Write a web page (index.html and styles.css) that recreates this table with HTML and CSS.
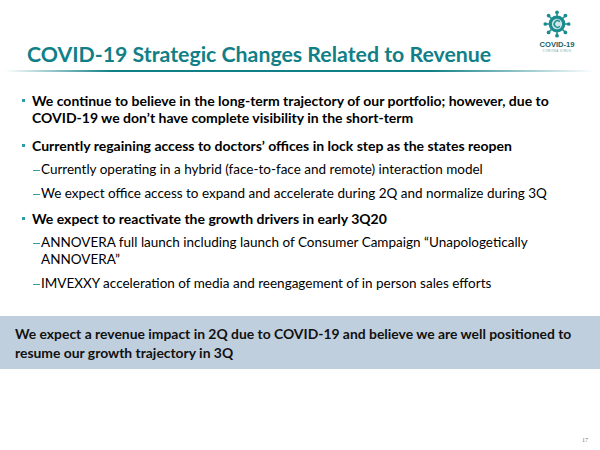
FILE: index.html
```html
<!DOCTYPE html>
<html>
<head>
<meta charset="utf-8">
<link rel="stylesheet" href="styles.css">
</head>
<body>
<div class="slide">
  <header class="header">
    <h1 class="title">COVID-19 Strategic Changes Related to Revenue</h1>
    <div class="logo">
      <svg class="virus" width="28" height="28" viewBox="0 0 30 30">
        <g stroke="#1b8c8f" stroke-width="1.6" fill="#1b8c8f">
          <line x1="15" y1="15" x2="15" y2="2"/>
          <line x1="15" y1="15" x2="15" y2="28"/>
          <line x1="15" y1="15" x2="2" y2="15"/>
          <line x1="15" y1="15" x2="28" y2="15"/>
          <line x1="15" y1="15" x2="5.8" y2="5.8"/>
          <line x1="15" y1="15" x2="24.2" y2="5.8"/>
          <line x1="15" y1="15" x2="5.8" y2="24.2"/>
          <line x1="15" y1="15" x2="24.2" y2="24.2"/>
          <circle cx="15" cy="2.5" r="2" stroke="none"/>
          <circle cx="15" cy="27.5" r="2" stroke="none"/>
          <circle cx="2.5" cy="15" r="2" stroke="none"/>
          <circle cx="27.5" cy="15" r="2" stroke="none"/>
          <circle cx="6" cy="6" r="2" stroke="none"/>
          <circle cx="24" cy="6" r="2" stroke="none"/>
          <circle cx="6" cy="24" r="2" stroke="none"/>
          <circle cx="24" cy="24" r="2" stroke="none"/>
          <circle cx="15" cy="15" r="9" stroke="none"/>
        </g>
        <circle cx="15" cy="15" r="5.5" fill="#cfe7e6"/>
        <path d="M18 12.5 A3.5 3.5 0 1 0 18 17.5" fill="none" stroke="#1b8c8f" stroke-width="1.6"/>
      </svg>
      <div class="logo-name">COVID-19</div>
      <div class="logo-sub">CORONA VIRUS</div>
    </div>
  </header>
  <div class="rule"></div>

  <ul class="points">
    <li class="point point-first">We continue to believe in the long-term trajectory of our portfolio; however, due to COVID-19 we don’t have complete visibility in the short-term</li>
    <li class="point point-second">Currently regaining access to doctors’ offices in lock step as the states reopen
      <ul class="subs">
        <li class="sub">Currently operating in a hybrid (face-to-face and remote) interaction model</li>
        <li class="sub">We expect office access to expand and accelerate during 2Q and normalize during 3Q</li>
      </ul>
    </li>
    <li class="point">We expect to reactivate the growth drivers in early 3Q20
      <ul class="subs">
        <li class="sub">ANNOVERA full launch including launch of Consumer Campaign “Unapologetically ANNOVERA”</li>
        <li class="sub">IMVEXXY acceleration of media and reengagement of in person sales efforts</li>
      </ul>
    </li>
  </ul>

  <div class="banner">We expect a revenue impact in 2Q due to COVID-19 and believe we are well positioned to resume our growth trajectory in 3Q</div>

  <footer class="footer">17</footer>
</div>
</body>
</html>
```

FILE: styles.css
```css
* { box-sizing: border-box; }
html, body { margin: 0; padding: 0; background: #fff; }
.slide {
  width: 600px;
  height: 450px;
  display: flex;
  flex-direction: column;
  font-family: Lato, "Open Sans", sans-serif;
  color: #000;
  overflow: hidden;
}
.header {
  display: flex;
  justify-content: space-between;
  align-items: flex-start;
  padding: 10px 23px 0 27px;
  height: 69px;
}
.title {
  margin: 31px 0 0 0;
  font-size: 21.3px;
  font-weight: 700;
  color: #117f87;
  line-height: 26px;
  white-space: nowrap;
}
.logo {
  flex: none;
  display: flex;
  flex-direction: column;
  align-items: center;
  width: 40px;
}
.virus { display: block; }
.logo-name {
  font-family: "Liberation Sans", sans-serif;
  font-weight: 700;
  font-size: 7.6px;
  color: #1d5f66;
  line-height: 9px;
  margin-top: 2px;
  white-space: nowrap;
}
.logo-sub {
  font-family: "Liberation Sans", sans-serif;
  font-size: 3px;
  letter-spacing: 0.5px;
  color: #6aa7aa;
  line-height: 4px;
  white-space: nowrap;
}
.rule {
  height: 2px;
  margin: 1px 5px 0;
  background: linear-gradient(to right, rgba(17,127,135,0) 0%, #117f87 18%, #117f87 72%, rgba(17,127,135,0) 100%);
}
.points {
  list-style: none;
  margin: 0;
  padding: 20px 20px 0 32px;
}
.point {
  position: relative;
  font-weight: 700;
  font-size: 14px;
  line-height: 17px;
  margin-bottom: 8px;
}
.point-first { margin-bottom: 11px; }
.point::before {
  content: "";
  position: absolute;
  left: -10px;
  top: 7px;
  width: 3px;
  height: 3px;
  background: #2aa0a6;
}
.subs {
  list-style: none;
  margin: 6.5px 0 0 0;
  padding: 0 0 0 9px;
}
.sub {
  position: relative;
  font-weight: 400;
  font-size: 13.5px;
  line-height: 17px;
  margin-bottom: 7.5px;
}
.sub:last-child { margin-bottom: 0; }
.sub::before {
  content: "";
  position: absolute;
  left: -8px;
  top: 9px;
  width: 7px;
  height: 1.2px;
  background: #3a9ea0;
}
.banner {
  margin-top: 16px;
  background: #c0cfdd;
  padding: 8px 20px 7px 15px;
  font-weight: 700;
  font-size: 13.9px;
  line-height: 19px;
  color: #111;
}
.footer {
  margin-top: auto;
  text-align: right;
  padding: 0 12px 7px 0;
  font-family: "Liberation Serif", serif;
  font-size: 6px;
  color: #777;
}
```
